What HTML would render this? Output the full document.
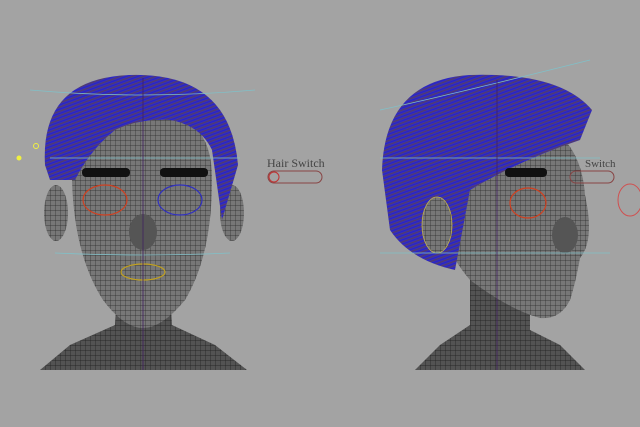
<!DOCTYPE html>
<html><head><meta charset="utf-8"><style>
html,body{margin:0;padding:0;background:#a3a3a3;width:640px;height:427px;overflow:hidden}
svg{display:block}
</style></head><body>
<svg width="640" height="427" viewBox="0 0 640 427" xmlns="http://www.w3.org/2000/svg">
<defs>
<pattern id="g" width="5" height="5" patternUnits="userSpaceOnUse">
<rect width="5" height="5" fill="#777"/>
<path d="M0 0H5M0 0V5" stroke="#2a2a2a" stroke-width="0.7"/>
</pattern>
<pattern id="h" width="6" height="4" patternUnits="userSpaceOnUse" patternTransform="rotate(-20)">
<rect width="6" height="4" fill="#3b30b0"/>
<path d="M0 1H6" stroke="#5a4050" stroke-width="0.8"/>
<path d="M0 3H6" stroke="#2020d0" stroke-width="0.8"/>
</pattern>
</defs>
<rect width="640" height="427" fill="#a3a3a3"/>
<!-- LEFT -->
<path d="M40 370 L70 345 L115 325 L117 290 L170 290 L172 325 L215 345 L247 370 Z" fill="url(#g)"/>
<path d="M40 370 L70 345 L115 325 L117 290 L170 290 L172 325 L215 345 L247 370 Z" fill="#000" opacity="0.3"/>
<ellipse cx="56" cy="213" rx="12" ry="28" fill="url(#g)"/>
<ellipse cx="232" cy="213" rx="12" ry="28" fill="url(#g)"/>
<path d="M72 180 Q72 110 143 108 Q213 110 212 180 Q212 255 185 300 Q162 328 143 328 Q124 328 103 300 Q74 255 72 180 Z" fill="url(#g)"/>
<path d="M45 165 Q40 78 130 75 Q230 72 238 165 L222 220 L212 150 Q200 125 170 120 Q140 118 115 130 Q90 150 75 180 L50 180 Z" fill="url(#h)"/>
<ellipse cx="105" cy="200" rx="22" ry="15" fill="none" stroke="#d04020" stroke-width="1.2"/>
<ellipse cx="180" cy="200" rx="22" ry="15" fill="none" stroke="#3030c0" stroke-width="1.2"/>
<rect x="82" y="168" width="48" height="9" rx="4" fill="#111"/>
<rect x="160" y="168" width="48" height="9" rx="4" fill="#111"/>
<ellipse cx="143" cy="272" rx="22" ry="8" fill="none" stroke="#c0a020" stroke-width="1.2"/>
<ellipse cx="143" cy="232" rx="14" ry="18" fill="#555"/>
<path d="M30 90 Q143 100 255 90 M55 253 Q143 257 230 253 M50 158 H240" stroke="#80c0c8" stroke-width="0.8" fill="none"/>
<path d="M143 78 V370" stroke="#402060" stroke-width="0.8"/>
<circle cx="19" cy="158" r="2.5" fill="#f0f040"/>
<circle cx="36" cy="146" r="2.5" fill="none" stroke="#f0f040"/>
<!-- Hair switch -->
<text x="267" y="167" font-family="Liberation Serif,serif" font-size="12" fill="#444">Hair Switch</text>
<rect x="268" y="171" width="54" height="12" rx="6" fill="none" stroke="#884444" stroke-width="1"/>
<circle cx="274" cy="177" r="5" fill="none" stroke="#c03030"/>
<!-- RIGHT -->
<path d="M415 370 L440 345 L470 325 L470 280 L530 290 L530 330 L560 345 L585 370 Z" fill="url(#g)"/>
<path d="M415 370 L440 345 L470 325 L470 280 L530 290 L530 330 L560 345 L585 370 Z" fill="#000" opacity="0.3"/>
<path d="M430 170 Q440 110 500 110 Q580 120 585 195 Q595 240 580 258 Q575 285 570 300 Q560 320 540 318 Q510 310 470 280 Q435 240 430 170 Z" fill="url(#g)"/>
<path d="M382 170 Q385 80 470 75 Q560 72 592 110 L580 140 Q520 160 470 190 L455 270 Q410 260 390 230 Z" fill="url(#h)"/>
<ellipse cx="437" cy="225" rx="15" ry="28" fill="url(#g)" stroke="#c0b050" stroke-width="0.8"/>
<rect x="505" y="168" width="42" height="9" rx="4" fill="#111"/>
<ellipse cx="528" cy="203" rx="18" ry="15" fill="none" stroke="#d04020" stroke-width="1.2"/>
<ellipse cx="565" cy="235" rx="13" ry="18" fill="#555"/>
<path d="M380 110 Q450 95 590 60 M380 158 H600 M380 253 H610" stroke="#80c0c8" stroke-width="0.8" fill="none"/>
<path d="M497 80 V370" stroke="#402060" stroke-width="0.8"/>
<text x="585" y="167" font-family="Liberation Serif,serif" font-size="11" fill="#444">Switch</text>
<rect x="570" y="171" width="44" height="12" rx="6" fill="none" stroke="#884444" stroke-width="1"/>
<ellipse cx="630" cy="200" rx="12" ry="16" fill="none" stroke="#d05050" stroke-width="1"/>
</svg>
</body></html>
